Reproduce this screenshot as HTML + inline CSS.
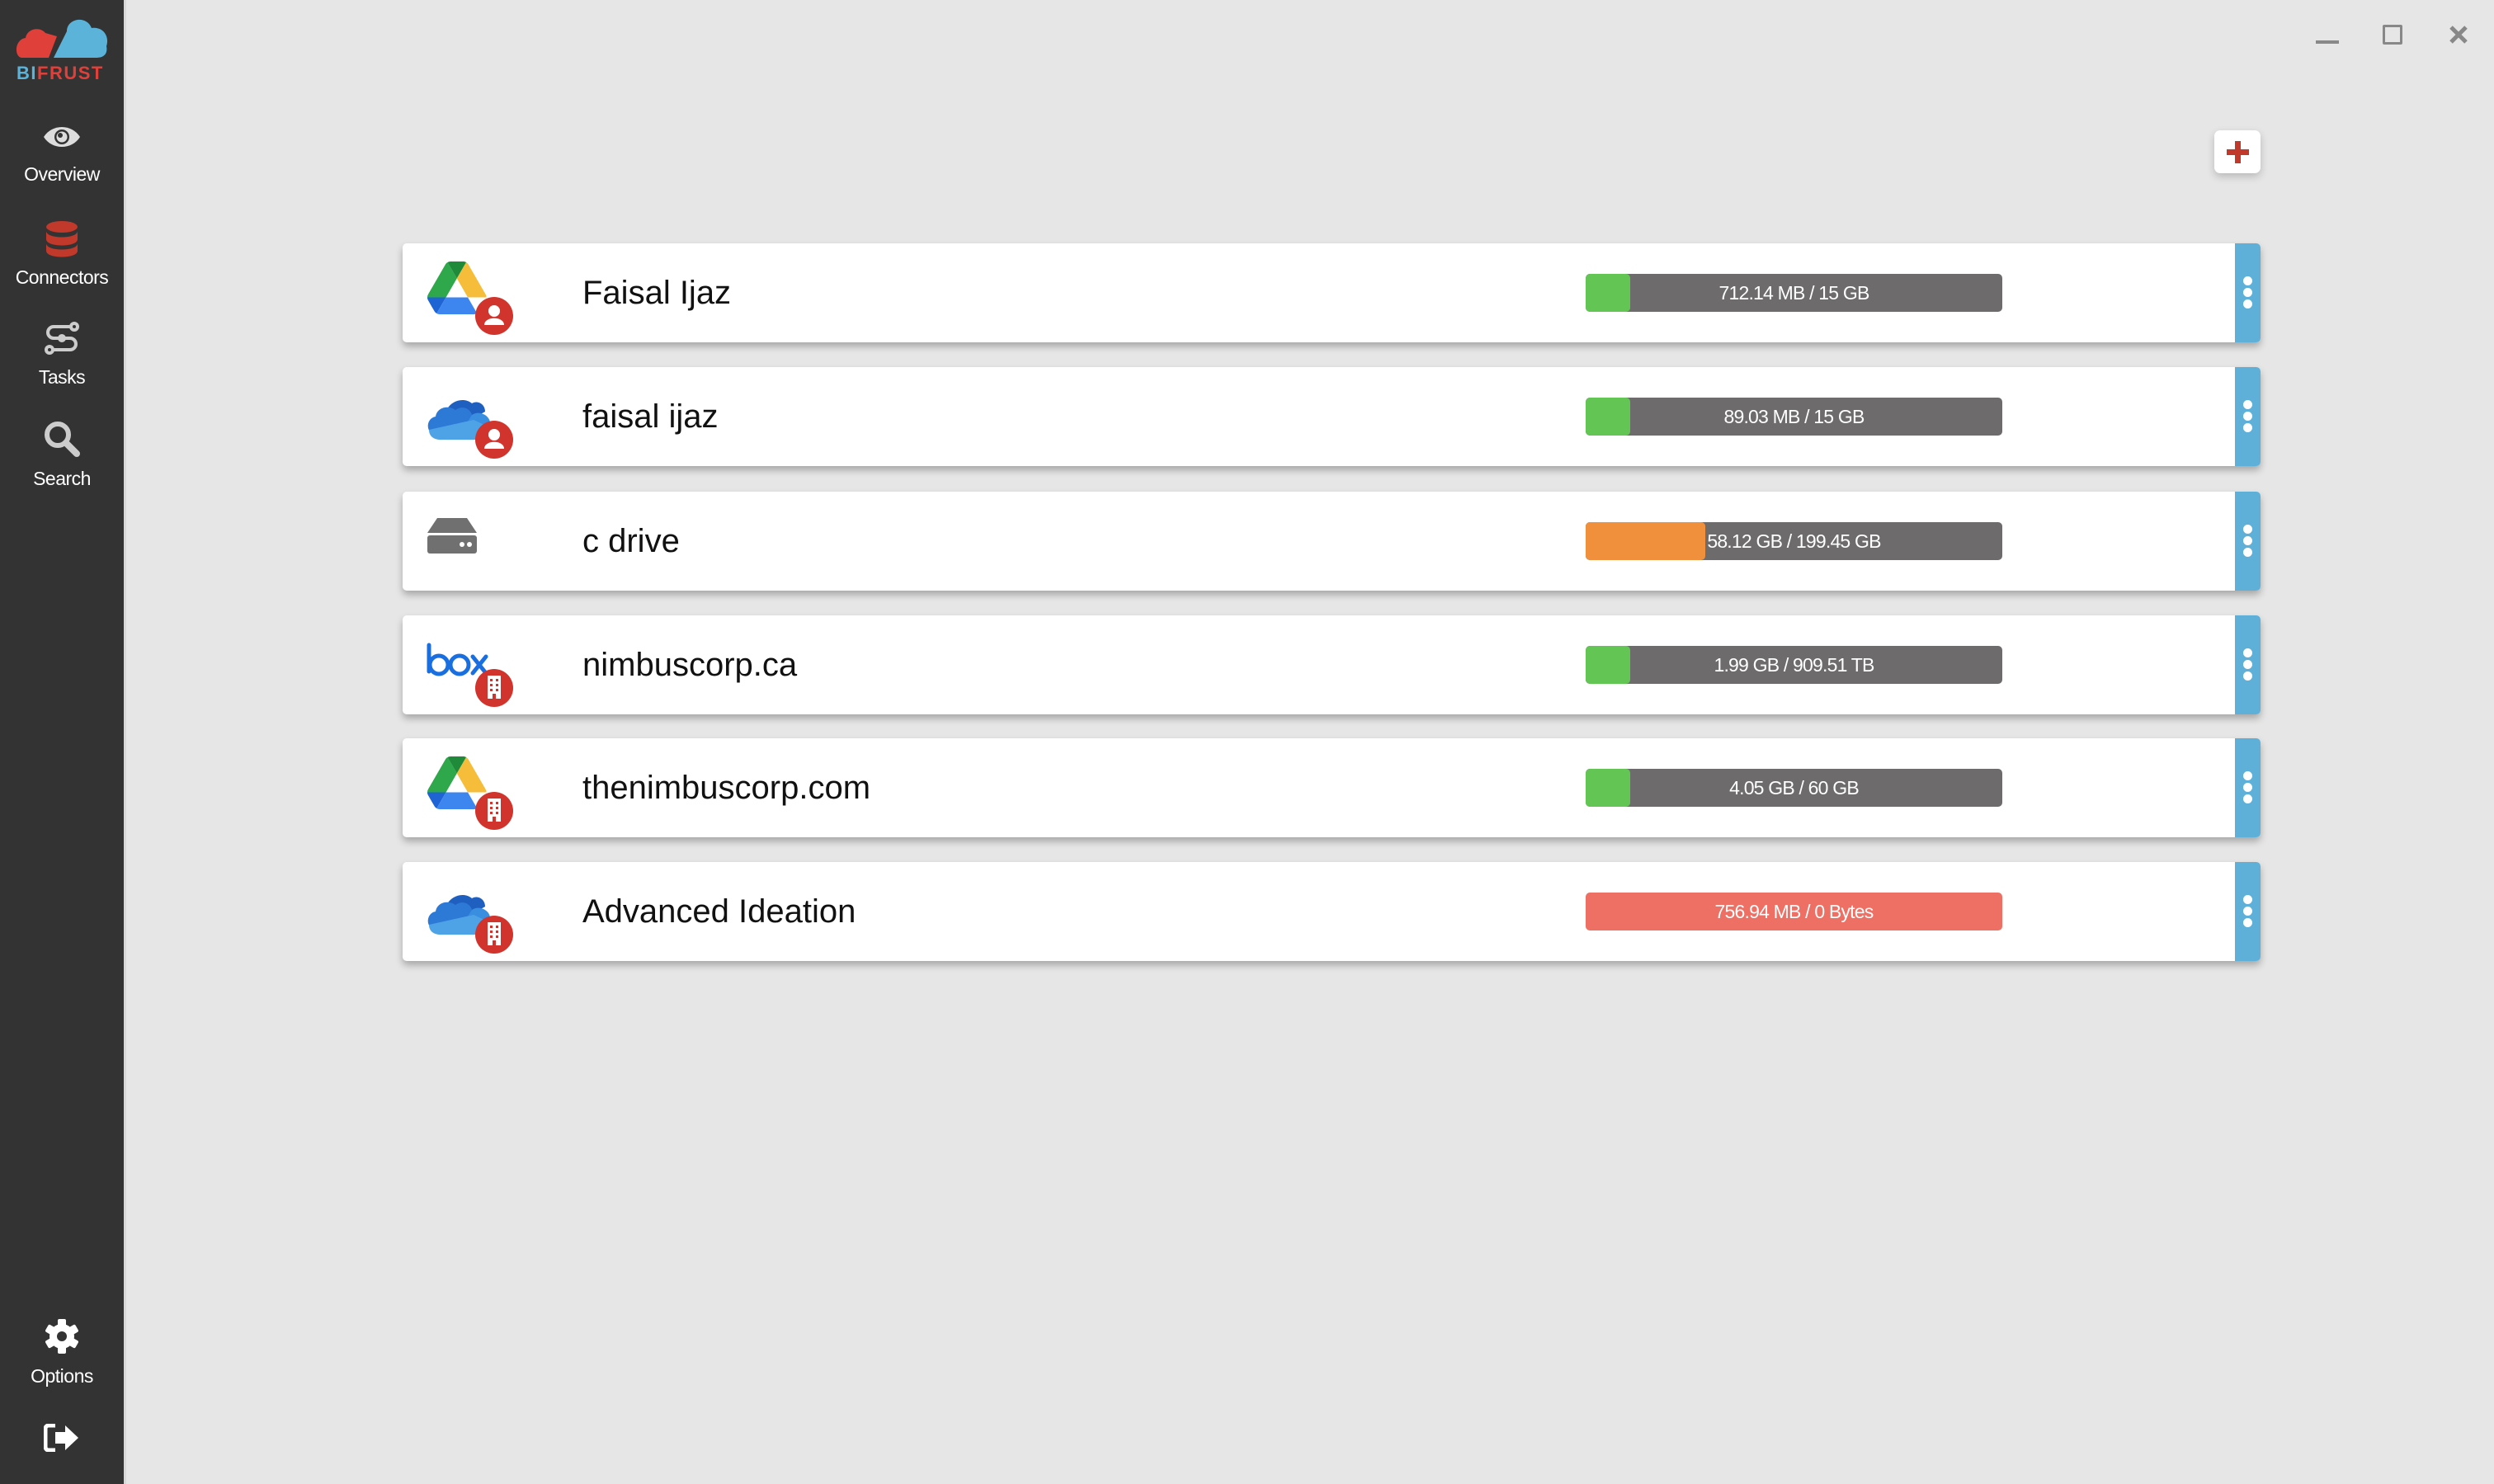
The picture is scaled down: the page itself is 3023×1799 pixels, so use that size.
<!DOCTYPE html>
<html><head><meta charset="utf-8">
<style>
*{margin:0;padding:0;box-sizing:border-box}
html,body{width:3023px;height:1799px;overflow:hidden;background:#e6e6e6;font-family:"Liberation Sans",sans-serif}
#side{position:absolute;left:0;top:0;width:153px;height:1799px;background:#333333;border-right:3px solid #d8d8d8}
.nav{position:absolute;left:0;width:150px;text-align:center;color:#fff;font-size:23px;letter-spacing:-0.5px}
.ico{position:absolute;left:0;width:150px;display:flex;justify-content:center}
.card{position:absolute;left:488px;width:2252px;height:120px;background:#fff;border-radius:5px;box-shadow:0 5px 9px rgba(0,0,0,.28)}
.strip{position:absolute;right:0;top:0;width:31px;height:120px;background:#5fb0d8;border-radius:0 5px 5px 0}
.dot{position:absolute;left:10px;width:11px;height:11px;border-radius:50%;background:#fff}
.name{position:absolute;left:218px;top:0;line-height:120px;font-size:40px;color:#111}
.bar{position:absolute;left:1434px;top:37px;width:505px;height:46px;background:#6d6b6b;border-radius:5px;overflow:hidden}
.fill{position:absolute;left:0;top:0;height:46px;border-radius:5px}
.bt{position:absolute;left:0;top:0;width:100%;line-height:46px;text-align:center;color:#fff;font-size:23px;letter-spacing:-0.8px}
.lg{position:absolute;left:28px;top:22px;width:110px;height:90px}
</style></head><body>
<div id="side">
  <svg style="position:absolute;left:19px;top:14px" width="114" height="84" viewBox="0 0 114 84">
    <path d="M8 56 C-2 56 -2 34 12 32 C14 20 30 18 36 26 L50 30 L40 56 Z" fill="#e0403a"/>
    <path d="M46 56 L62 24 C62 8 86 4 92 20 C106 18 114 30 110 42 C112 52 106 56 98 56 Z" fill="#5bb3da"/>
    <text x="1" y="82" font-family="Liberation Sans" font-weight="bold" font-size="22" fill="#5bb3da" letter-spacing="1.5">BI<tspan fill="#e0403a">FRUST</tspan></text>
  </svg>
  <div class="ico" style="top:150px"><svg width="48" height="32" viewBox="0 0 48 32"><path d="M2 16 C12 0 36 0 46 16 C36 32 12 32 2 16Z" fill="#ddd"/><circle cx="24" cy="16" r="9" fill="#333"/><circle cx="24" cy="16" r="6.5" fill="#ddd"/><circle cx="22" cy="14" r="3" fill="#333"/></svg></div>
  <div class="nav" style="top:198px">Overview</div>
  <div class="ico" style="top:268px"><svg width="40" height="44" viewBox="0 0 40 44"><ellipse cx="20" cy="7" rx="19" ry="7" fill="#c0392b"/><path d="M1 12 C1 22 39 22 39 12 V22 C39 32 1 32 1 22Z" fill="#c0392b"/><path d="M1 27 C1 37 39 37 39 27 V36 C39 46 1 46 1 36Z" fill="#c0392b"/></svg></div>
  <div class="nav" style="top:323px">Connectors</div>
  <div class="ico" style="top:390px"><svg width="44" height="40" viewBox="0 0 44 40" fill="none" stroke="#ccc" stroke-width="4"><circle cx="37" cy="6" r="4"/><circle cx="7" cy="34" r="4"/><path d="M32 6 H12 A7 7 0 0 0 12 20 H32 A7 7 0 0 1 32 34 H12"/><circle cx="22" cy="20" r="3" fill="#ccc"/></svg></div>
  <div class="nav" style="top:444px">Tasks</div>
  <div class="ico" style="top:510px"><svg width="44" height="44" viewBox="0 0 44 44"><circle cx="17" cy="17" r="13" fill="none" stroke="#ccc" stroke-width="6"/><path d="M27 27 L40 40" stroke="#ccc" stroke-width="8" stroke-linecap="round"/></svg></div>
  <div class="nav" style="top:567px">Search</div>
  <div class="ico" style="top:1598px"><svg width="44" height="44" viewBox="0 0 44 44"><g fill="#fff"><circle cx="22" cy="22" r="15"/><g id="t"><rect x="17" y="1" width="10" height="10" rx="2"/><rect x="17" y="33" width="10" height="10" rx="2"/></g><use href="#t" transform="rotate(60 22 22)"/><use href="#t" transform="rotate(120 22 22)"/></g><circle cx="22" cy="22" r="6" fill="#333"/></svg></div>
  <div class="nav" style="top:1655px">Options</div>
  <div class="ico" style="top:1726px"><svg width="44" height="34" viewBox="0 0 44 34"><path d="M14 2 H6 A4 4 0 0 0 2 6 V28 A4 4 0 0 0 6 32 H14" fill="none" stroke="#fff" stroke-width="5"/><path d="M14 10 H26 V2 L42 17 L26 32 V24 H14Z" fill="#fff"/></svg></div>
</div>

<div style="position:absolute;left:2807px;top:49px;width:28px;height:4px;background:#888"></div>
<div style="position:absolute;left:2888px;top:30px;width:24px;height:24px;border:3px solid #888;border-radius:2px"></div>
<svg style="position:absolute;left:2968px;top:31px" width="24" height="22" viewBox="0 0 24 22"><path d="M3 2 L21 20 M21 2 L3 20" stroke="#888" stroke-width="5"/></svg>

<div style="position:absolute;left:2684px;top:158px;width:56px;height:52px;background:#fff;border-radius:7px;box-shadow:0 4px 10px rgba(0,0,0,.2)">
  <div style="position:absolute;left:15px;top:23px;width:27px;height:7px;background:#c0392b"></div>
  <div style="position:absolute;left:25px;top:13px;width:7px;height:27px;background:#c0392b"></div>
</div>

<svg width="0" height="0" style="position:absolute">
  <defs>
    <g id="user"><circle cx="83" cy="66" r="23" fill="#d0342c"/><circle cx="83" cy="60" r="7" fill="#fff"/><path d="M71 77 C71 66 95 66 95 77 Z" fill="#fff"/></g>
    <g id="bld"><circle cx="83" cy="66" r="23" fill="#d0342c"/><rect x="75" y="51" width="16" height="28" fill="#fff"/><g fill="#d0342c"><rect x="78" y="55" width="3" height="3"/><rect x="85" y="55" width="3" height="3"/><rect x="78" y="61" width="3" height="3"/><rect x="85" y="61" width="3" height="3"/><rect x="78" y="67" width="3" height="3"/><rect x="85" y="67" width="3" height="3"/><rect x="81" y="73" width="4" height="6"/></g></g>
    <g id="gdrive" transform="translate(2,0) scale(0.82)">
      <path d="m6.6 66.85 3.850 6.65c.8 1.4 1.95 2.5 3.3 3.3l13.75-23.8h-27.5c0 1.55.4 3.1 1.2 4.5z" fill="#1e64d4"/>
      <path d="m43.65 25-13.75-23.8c-1.35.8-2.5 1.9-3.3 3.3l-25.4 44a9.06 9.06 0 0 0 -1.2 4.5h27.5z" fill="#2ea84a"/>
      <path d="m43.65 25 13.75-23.8c-1.35-.8-2.9-1.2-4.5-1.2h-18.5c-1.6 0-3.15.45-4.5 1.2z" fill="#1f8a3a"/>
      <path d="m59.8 53h-32.3l-13.75 23.8c1.35.8 2.9 1.2 4.5 1.2h50.8c1.6 0 3.15-.45 4.5-1.2z" fill="#3d86f0"/>
      <path d="m73.4 26.5-12.7-22c-.8-1.4-1.950-2.5-3.3-3.3l-13.75 23.8 16.15 28h27.45c0-1.55-.4-3.1-1.2-4.5z" fill="#f6bd3b"/>
    </g>
    <g id="od">
      <path d="M24 40 C22 22 44 12 56 22 C62 18 72 22 72 32 L40 50Z" fill="#1f5fbf"/>
      <path d="M10 58 C0 58 0 40 12 38 C14 26 28 24 36 30 C44 24 54 28 56 36 L56 62 L14 62Z" fill="#2d79d6"/>
      <path d="M56 36 C64 30 78 36 78 46 C88 48 86 62 76 62 L40 62Z" fill="#3a8ee0"/>
      <path d="M4 54 C4 62 10 66 18 66 L78 66 C84 66 88 60 84 54 L58 42 Z" fill="#4ea3e6"/>
    </g>
  </defs>
</svg>

<div class="card" style="top:295px">
  <svg class="lg" viewBox="0 0 110 90"><use href="#gdrive"/><use href="#user"/></svg>
  <div class="name">Faisal Ijaz</div>
  <div class="bar"><div class="fill" style="width:54px;background:#62c554"></div><div class="bt">712.14 MB / 15 GB</div></div>
  <div class="strip"><div class="dot" style="top:40px"></div><div class="dot" style="top:54px"></div><div class="dot" style="top:68px"></div></div>
</div>
<div class="card" style="top:445px">
  <svg class="lg" viewBox="0 0 110 90"><use href="#od"/><use href="#user"/></svg>
  <div class="name">faisal ijaz</div>
  <div class="bar"><div class="fill" style="width:54px;background:#62c554"></div><div class="bt">89.03 MB / 15 GB</div></div>
  <div class="strip"><div class="dot" style="top:40px"></div><div class="dot" style="top:54px"></div><div class="dot" style="top:68px"></div></div>
</div>
<div class="card" style="top:596px">
  <svg class="lg" viewBox="0 0 110 90"><path d="M14 10 H50 L62 28 H2 Z" fill="#707070"/><rect x="2" y="31" width="60" height="22" rx="3" fill="#707070"/><circle cx="44" cy="42" r="3" fill="#fff"/><circle cx="53" cy="42" r="3" fill="#fff"/></svg>
  <div class="name">c drive</div>
  <div class="bar"><div class="fill" style="width:145px;background:#f0903c"></div><div class="bt">58.12 GB / 199.45 GB</div></div>
  <div class="strip"><div class="dot" style="top:40px"></div><div class="dot" style="top:54px"></div><div class="dot" style="top:68px"></div></div>
</div>
<div class="card" style="top:746px">
  <svg class="lg" viewBox="0 0 110 90"><g fill="none" stroke="#1a6fe0" stroke-width="5" stroke-linecap="round"><path d="M4 14 V46"/><circle cx="16" cy="38" r="11"/><circle cx="41" cy="38" r="11"/><path d="M57 28 L73 48 M73 28 L57 48"/></g><use href="#bld"/></svg>
  <div class="name">nimbuscorp.ca</div>
  <div class="bar"><div class="fill" style="width:54px;background:#62c554"></div><div class="bt">1.99 GB / 909.51 TB</div></div>
  <div class="strip"><div class="dot" style="top:40px"></div><div class="dot" style="top:54px"></div><div class="dot" style="top:68px"></div></div>
</div>
<div class="card" style="top:895px">
  <svg class="lg" viewBox="0 0 110 90"><use href="#gdrive"/><use href="#bld"/></svg>
  <div class="name">thenimbuscorp.com</div>
  <div class="bar"><div class="fill" style="width:54px;background:#62c554"></div><div class="bt">4.05 GB / 60 GB</div></div>
  <div class="strip"><div class="dot" style="top:40px"></div><div class="dot" style="top:54px"></div><div class="dot" style="top:68px"></div></div>
</div>
<div class="card" style="top:1045px">
  <svg class="lg" viewBox="0 0 110 90"><use href="#od"/><use href="#bld"/></svg>
  <div class="name">Advanced Ideation</div>
  <div class="bar" style="background:#ee6f63"><div class="bt">756.94 MB / 0 Bytes</div></div>
  <div class="strip"><div class="dot" style="top:40px"></div><div class="dot" style="top:54px"></div><div class="dot" style="top:68px"></div></div>
</div>
</body></html>
